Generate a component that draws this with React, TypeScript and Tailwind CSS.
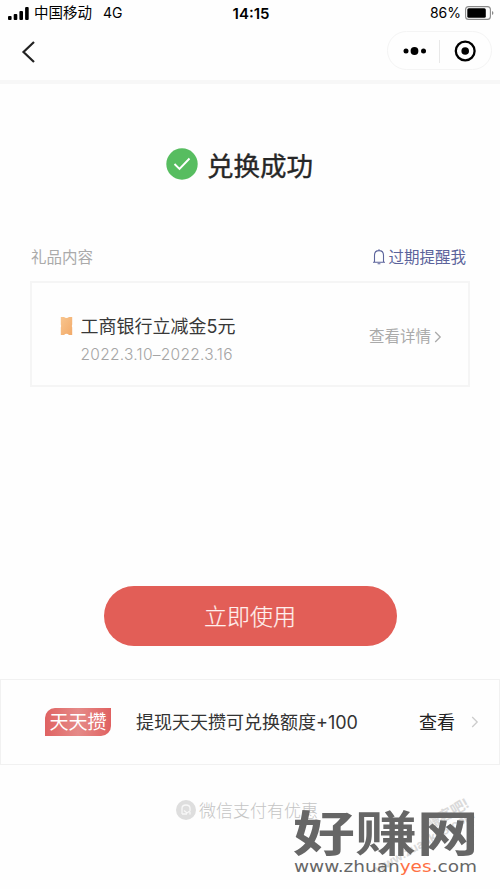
import { ReactNode } from "react";

// Status bar: signal, carrier, time and battery
function StatusBar() {
  return (
    <div className="grid h-[26px] grid-cols-3 items-center pl-2 pr-[6px] text-[14px] leading-none text-black">
      <div className="flex items-center">
        <svg width="22" height="13" viewBox="0 0 22 13" fill="#000">
          <rect x="0" y="9" width="3.6" height="4" rx="1" />
          <rect x="5.7" y="7" width="3.6" height="6" rx="1" />
          <rect x="11.4" y="4" width="3.6" height="9" rx="1" />
          <rect x="17.1" y="0" width="3.6" height="13" rx="1" />
        </svg>
        <span className="ml-1 pt-px text-[14.5px]">中国移动</span>
        <span className="ml-[11px]">4G</span>
      </div>
      <div className="text-center text-[15px] font-semibold">14:15</div>
      <div className="flex items-center justify-end">
        <span className="mr-1">86%</span>
        <svg className="-mt-px" width="29" height="14" viewBox="0 0 29 14">
          <rect x="0.6" y="0.6" width="24.8" height="12.8" rx="3" fill="none" stroke="#8a8a8a" strokeWidth="1.1" />
          <rect x="2.3" y="2.3" width="18.5" height="9.4" rx="1.5" fill="#000" />
          <path d="M27 5v4c1-.5 1.4-1.1 1.4-2S28 5.500 27 5z" fill="#8a8a8a" />
        </svg>
      </div>
    </div>
  );
}

function NavBar() {
  return (
    <div className="flex h-[58px] items-start justify-between border-b-4 border-[#f7f7f7] pl-[21px] pr-[8px] pt-[5px]">
      <svg className="mt-[10px]" width="15" height="22" viewBox="0 0 15 22" fill="none" stroke="#222" strokeWidth="2.2">
        <path d="M13 1L2.500 11L13 21" />
      </svg>
      <div className="flex h-[39px] w-[105px] items-center rounded-full border border-[#f4f4f4]">
        <svg width="103" height="36" viewBox="0 0 103 36">
          <circle cx="18" cy="18" r="2.500" />
          <circle cx="26.500" cy="18" r="3.900" />
          <circle cx="35.500" cy="18" r="2.500" />
          <path d="M51.500 7v23" stroke="#e8e8e8" />
          <circle cx="77.200" cy="18" r="9.400" fill="none" stroke="#000" strokeWidth="2.300" />
          <circle cx="77.200" cy="18" r="3.800" />
        </svg>
      </div>
    </div>
  );
}

function Chevron({ className }: { className: string }) {
  return (
    <svg className={className} width="8" height="12" viewBox="0 0 8 12" fill="none" stroke="currentColor" strokeWidth="1.3">
      <path d="M1.200 1L6.200 6L1.200 11" />
    </svg>
  );
}

function GiftCard({ children }: { children: ReactNode }) {
  return (
    <div className="mx-[30px] mt-[13px] flex h-[106px] w-[440px] justify-between border-2 border-[#f5f5f5] pl-[28px] pr-[26px]">
      {children}
    </div>
  );
}

export default function App() {
  return (
    <div className="relative flex h-[889px] w-[500px] flex-col overflow-hidden bg-[#fefefe] font-['Inter','Noto_Sans_CJK_SC',sans-serif]">
      <StatusBar />
      <NavBar />

      {/* Result */}
      <div className="mt-[61px] flex h-[38px] items-center justify-center pr-[21px]">
        <svg width="32" height="32" viewBox="0 0 32 32">
          <circle cx="16" cy="16" r="15.700" fill="#57bd60" />
          <path d="M8.500 16L13.500 21L23.500 10.500" fill="none" stroke="#fff" strokeWidth="1.900" />
        </svg>
        <h1 className="ml-[9px] pt-[4px] text-[26.5px] leading-none font-normal text-[#262626] [-webkit-text-stroke:0.4px_#262626]">兑换成功</h1>
      </div>

      {/* Gift */}
      <div className="mt-[61px] flex h-[24px] items-center justify-between pl-[31px] pr-[34px] pt-[3px] text-[15.5px] leading-none">
        <span className="text-[#aaa]">礼品内容</span>
        <span className="flex items-center text-[#5b639b]">
          <svg className="mr-[2px] -mt-px" width="14" height="16" viewBox="0 0 14 16" fill="none" stroke="currentColor" strokeWidth="1.1">
            <path d="M1 13.300H13M2.500 13V6.200C2.500 3.500 4.300 1.600 7 1.600S11.500 3.500 11.500 6.200V13M7 .3V1.600M5.600 14.800H8.400" />
          </svg>
          过期提醒我
        </span>
      </div>
      <GiftCard>
        <div className="flex items-start pt-[34px]">
          <svg width="13" height="18" viewBox="0 0 13 18">
            <defs>
              <linearGradient id="ticket" x1="0" y1="0" x2="1" y2="1">
                <stop offset="0" stopColor="#f8c58e" />
                <stop offset="1" stopColor="#f2aa69" />
              </linearGradient>
            </defs>
            <path d="M.8 0H4Q6.500 2.200 9 0H12.200V7.500Q11.400 9 12.200 10.500V18H9Q6.500 15.500 4 18H.8V10.500Q1.600 9 .8 7.500Z" fill="url(#ticket)" />
          </svg>
          <div className="ml-[7.5px]">
            <div className="text-[18px] leading-[20px] text-[#383838]">工商银行立减金5元</div>
            <div className="mt-[9px] text-[15.5px] leading-[18px] tracking-[0.27px] font-light text-[#a5a5a5]">2022.3.10–2022.3.16</div>
          </div>
        </div>
        <div className="flex items-center pt-[5px] text-[15.5px] leading-none text-[#aaa]">
          查看详情
          <Chevron className="ml-[3px]" />
        </div>
      </GiftCard>

      <button className="mx-auto mt-[199px] h-[60px] w-[293px] rounded-full bg-[#e25e57] pt-[3px] text-[23px] leading-none font-light text-[#fff0ee] [-webkit-text-stroke:0.2px_#fff0ee]">
        立即使用
      </button>

      {/* Promo row */}
      <div className="mt-[33px] flex h-[86px] items-center border border-[#f1f1f1] pl-[44px] pr-[20px] text-[18px] leading-none text-[#333]">
        <span className="flex h-[28px] w-[66px] items-center justify-center rounded-tl-[10px] rounded-br-[10px] bg-linear-to-r from-[#df6262] via-[#e58a88] to-[#e06161] text-[19px] text-white">
          天天攒
        </span>
        <span className="ml-[25px] pt-px">提现天天攒可兑换额度+100</span>
        <span className="ml-auto pt-px text-[#222]">查看</span>
        <Chevron className="ml-[16px] text-[#ccc]" />
      </div>

      {/* Footer */}
      <div className="mt-[35px] flex items-center pl-[176px] text-[17px] leading-none font-light text-[#c4c4c4]">
        <svg className="mr-[3px]" width="20" height="20" viewBox="0 0 20 20">
          <circle cx="10" cy="10" r="10" fill="#dedede" />
          <path d="M6 14V8.500Q6 5 10 5T14 8.500V11M6 14H11M8 10.500L11 13L14.500 10.500M14 12V14.500" fill="none" stroke="#f8f8f8" strokeWidth="1.3" />
        </svg>
        <span className="pt-[2px]">微信支付有优惠</span>
      </div>

      {/* Site stamp lying over the page */}
      <div className="absolute left-[361px] top-[823px] w-[120px] -rotate-[30deg] text-center leading-none font-bold text-[#dadada]">
        <div className="pl-[68px] text-[14px]">赚客吧!</div>
        <div className="text-[12px]">www.zuanke8.com</div>
      </div>
      <div className="absolute left-[293px] top-[804px] origin-left scale-x-[1.29] whitespace-nowrap text-[48px] leading-[60px] font-bold text-[#666]">
        好赚网
      </div>
      <div className="absolute left-[294px] top-[857px] origin-left scale-x-[1.155] whitespace-nowrap font-['DejaVu_Sans',sans-serif] text-[16px] leading-[20px] text-[#666]">
        www.zhuan<span className="text-[#ff7043]">yes</span>.com
      </div>
    </div>
  );
}
